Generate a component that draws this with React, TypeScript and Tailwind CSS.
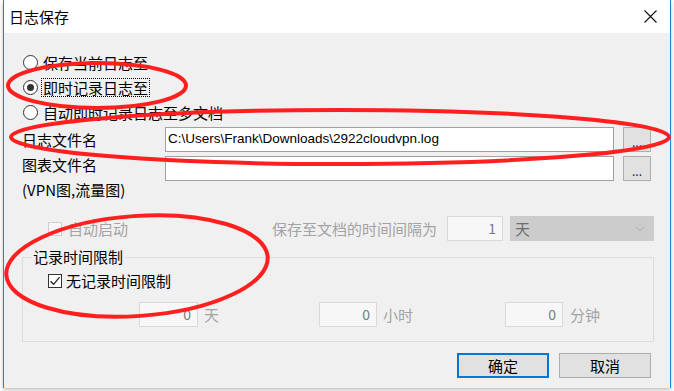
import { ChevronDown } from "lucide-react"

const font = "font-['Noto_Sans_CJK_SC','Noto_Sans',sans-serif]"

function Radio({ label, checked = false, focused = false }: { label: string; checked?: boolean; focused?: boolean }) {
  return (
    <div className="flex h-[25px] items-center pl-[19px]">
      <div className="flex h-[15px] w-[15px] items-center justify-center rounded-full border border-[#333] bg-white">
        {checked && <div className="h-[7px] w-[7px] rounded-full bg-[#333]" />}
      </div>
      <span
        className={
          focused
            ? "ml-[3px] border border-dotted border-black px-[1px] text-[15px] leading-[17px] text-black"
            : "ml-[5px] text-[15px] leading-[17px] text-black"
        }
      >
        {label}
      </span>
    </div>
  )
}

function DisabledNum({ value, w }: { value: string; w: string }) {
  return (
    <div className={`flex h-[25px] items-center justify-end border border-[#d9d9d9] bg-[#f7f7f7] pr-[6px] text-[14px] text-[#7a7a7a] ${w}`}>
      {value}
    </div>
  )
}

export default function App() {
  return (
    <div className={`relative h-[391px] w-[674px] overflow-hidden bg-white ${font}`}>
      <div className="ml-[3px] flex h-[388px] w-[668px] flex-col border-x border-[#1883d7] shadow-[0_2px_4px_rgba(0,0,0,0.25)]">
        {/* title bar */}
        <div className="flex h-[33px] items-center justify-between bg-white pl-[5px] pr-[13px]">
          <span className="text-[15px] leading-[18px] text-black">日志保存</span>
          <svg width="13" height="13" viewBox="0 0 13 13" className="mb-[1px]">
            <path d="M0.5 0.5 L12.5 12.5 M12.5 0.5 L0.5 12.5" stroke="#111" strokeWidth="1.1" />
          </svg>
        </div>

        {/* body */}
        <div className="flex flex-1 flex-col bg-[#f0f0f0] pt-[17px]">
          <Radio label="保存当前日志至" />
          <Radio label="即时记录日志至" checked focused />
          <Radio label="自动即时记录日志至多文档" />

          <div className="mt-[2px] flex items-center pl-[18px]">
            <span className="w-[143px] text-[15px] leading-[18px] text-black">日志文件名</span>
            <div className="flex h-[25px] w-[449px] items-center border border-[#a0a0a0] bg-white pl-[2px] font-['Liberation_Sans',sans-serif] text-[13.5px] text-black">
              C:\Users\Frank\Downloads\2922cloudvpn.log
            </div>
            <div className="ml-[9px] flex h-[25px] w-[28px] items-end justify-center border border-[#adadad] bg-[#e1e1e1] pb-[3px] text-[12px] leading-[12px] text-[#1a1a60]">
              ...
            </div>
          </div>

          <div className="mt-[4px] flex items-start pl-[18px]">
            <div className="flex w-[143px] flex-col">
              <span className="text-[15px] leading-[18px] text-black">图表文件名</span>
              <span className="mt-[7px] text-[15px] leading-[18px] text-black">(VPN图,流量图)</span>
            </div>
            <div className="h-[25px] w-[449px] border border-[#a0a0a0] bg-white" />
            <div className="ml-[9px] flex h-[25px] w-[28px] items-end justify-center border border-[#adadad] bg-[#e1e1e1] pb-[3px] text-[12px] leading-[12px] text-[#1a1a60]">
              ...
            </div>
          </div>

          <div className="mt-[17px] flex h-[25px] items-center pl-[44px]">
            <div className="h-[14px] w-[14px] border border-[#cfcfcf] bg-[#f7f7f7]" />
            <span className="ml-[6px] text-[15px] leading-[18px] text-[#a3a3a3]">自动启动</span>
            <span className="ml-[144px] text-[15px] leading-[18px] text-[#a3a3a3]">保存至文档的时间间隔为</span>
            <div className="ml-[10px]">
              <DisabledNum value="1" w="w-[56px]" />
            </div>
            <div className="ml-[7px] flex h-[25px] w-[144px] items-center justify-between border border-[#cccccc] bg-[#cccccc] pl-[4px] pr-[6px]">
              <span className="text-[15px] leading-[18px] text-[#6d6d6d]">天</span>
              <ChevronDown size={14} strokeWidth={1.2} color="#a0a0a0" />
            </div>
          </div>

          <fieldset className="ml-[18px] mt-[6px] w-[632px] border border-[#dcdcdc] pb-[14px]">
            <legend className="ml-[9px] px-[1px] text-[15px] leading-[20px] text-black">记录时间限制</legend>
            <div className="mt-[1px] flex h-[25px] items-center pl-[25px]">
              <div className="flex h-[14px] w-[14px] items-center justify-center border border-[#333] bg-white">
                <svg width="12" height="12" viewBox="0 0 12 12">
                  <path d="M1.5 6.2 L4.6 9.3 L10.6 2.2" fill="none" stroke="#222" strokeWidth="1.3" />
                </svg>
              </div>
              <span className="ml-[4px] text-[15px] leading-[18px] text-black">无记录时间限制</span>
            </div>
            <div className="mt-[9px] flex items-center pl-[116px]">
              <DisabledNum value="0" w="w-[59px]" />
              <span className="ml-[6px] text-[15px] leading-[18px] text-[#a3a3a3]">天</span>
              <div className="ml-[100px]">
                <DisabledNum value="0" w="w-[58px]" />
              </div>
              <span className="ml-[6px] text-[15px] leading-[18px] text-[#a3a3a3]">小时</span>
              <div className="ml-[92px]">
                <DisabledNum value="0" w="w-[58px]" />
              </div>
              <span className="ml-[7px] text-[15px] leading-[18px] text-[#a3a3a3]">分钟</span>
            </div>
          </fieldset>

          <div className="mr-[19px] mt-[11px] flex justify-end gap-[10px]">
            <button className="flex h-[25px] w-[92px] items-center justify-center border-2 border-[#0078d7] bg-[#e1e1e1] text-[15px] leading-[18px] text-black">
              确定
            </button>
            <button className="flex h-[25px] w-[92px] items-center justify-center border border-[#adadad] bg-[#e1e1e1] text-[15px] leading-[18px] text-black">
              取消
            </button>
          </div>
        </div>
      </div>

      {/* red annotation marks drawn over the screenshot */}
      <svg className="pointer-events-none absolute left-0 top-0" width="674" height="391">
        <ellipse cx="97" cy="85.5" rx="89" ry="22.5" fill="none" stroke="#ff1f1f" strokeWidth="4" />
        <ellipse cx="340" cy="137" rx="329" ry="27" fill="none" stroke="#ff1f1f" strokeWidth="4" />
        <ellipse cx="137" cy="266" rx="131" ry="50" fill="none" stroke="#ff1f1f" strokeWidth="4" transform="rotate(-4 137 266)" />
      </svg>
    </div>
  )
}
